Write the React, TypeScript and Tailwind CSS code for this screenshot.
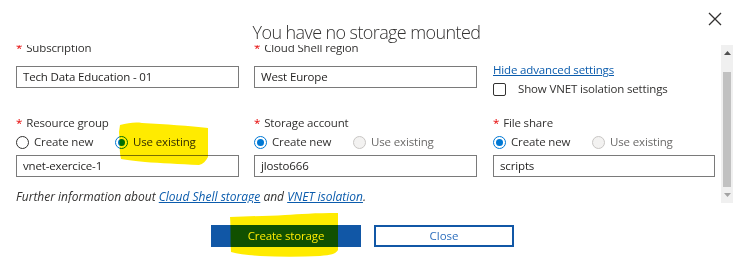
import React from "react";

const font = "font-['Open_Sans','Noto_Sans',sans-serif]";
const body = "text-[11.5px] tracking-[-0.15px]";

function Label({ text }: { text: string }) {
  return (
    <div className={`h-[16px] leading-[16px] ${body} text-[#323130] whitespace-nowrap`}>
      <span className="text-[#e50000] mr-[4px]">*</span>
      {text}
    </div>
  );
}

function Input({ value, w = "w-[223px]" }: { value: string; w?: string }) {
  return (
    <div className={`h-[22px] ${w} border border-[#7a7a7a] bg-white px-[6px] flex items-center ${body} text-[#201f1e] whitespace-nowrap`}>
      {value}
    </div>
  );
}

function Radio({ checked, disabled, label }: { checked?: boolean; disabled?: boolean; label: string }) {
  return (
    <div className="flex items-center h-[16px] w-[99px] whitespace-nowrap">
      <span
        className={
          "w-[13px] h-[13px] rounded-full border flex items-center justify-center shrink-0 " +
          (checked
            ? "border-[#0078d4] bg-white"
            : disabled
            ? "border-[#c8c6c4] bg-[#f3f2f1]"
            : "border-[#323130] bg-white")
        }
      >
        {checked && <span className="w-[7px] h-[7px] rounded-full bg-[#0078d4]" />}
      </span>
      <span className={`ml-[5px] ${body} ` + (disabled ? "text-[#6b6a69]" : "text-[#323130]")}>{label}</span>
    </div>
  );
}

function Radios({ first, second }: { first: boolean; second?: "checked" | "disabled" | "normal" }) {
  return (
    <div className="flex mt-[3px]">
      <Radio checked={first} label="Create new" />
      <Radio checked={second === "checked"} disabled={second === "disabled"} label="Use existing" />
    </div>
  );
}

export default function App() {
  return (
    <div className={`w-[733px] h-[265px] bg-white relative overflow-hidden ${font}`}>
      {/* header */}
      <div className="h-[45px] relative flex justify-center">
        <div className="pt-[20px] text-[18px] leading-[24px] tracking-[-0.6px] font-light text-[#323130] whitespace-nowrap">
          You have no storage mounted
        </div>
        <button className="absolute right-[11px] top-[12px] w-[14px] h-[14px]">
          <svg width="14" height="14" viewBox="0 0 14 14">
            <path d="M1 1 L13 13 M13 1 L1 13" stroke="#323130" strokeWidth="1.3" fill="none" />
          </svg>
        </button>
      </div>

      {/* body */}
      <div className="flex">
        <div className="w-[725px] h-[158px] overflow-hidden">
          <div className="mt-[-5px] pl-[16px]">
            {/* row 1 */}
            <div className="flex gap-[15px] h-[48px]">
              <div className="flex flex-col w-[223px]">
                <Label text="Subscription" />
                <div className="mt-[10px]">
                  <Input value="Tech Data Education - 01" />
                </div>
              </div>
              <div className="flex flex-col w-[223px]">
                <Label text="Cloud Shell region" />
                <div className="mt-[10px]">
                  <Input value="West Europe" />
                </div>
              </div>
              <div className="flex flex-col w-[222px] ml-[1px]">
                <a className={`mt-[22px] h-[16px] leading-[16px] ${body} text-[#0b5cad] underline whitespace-nowrap`}>
                  Hide advanced settings
                </a>
                <div className="mt-[3px] flex items-center h-[16px]">
                  <span className="w-[13px] h-[13px] border border-[#323130] rounded-[2px] bg-white shrink-0" />
                  <span className={`ml-[12px] ${body} text-[#323130] whitespace-nowrap`}>
                    Show VNET isolation settings
                  </span>
                </div>
              </div>
            </div>

            {/* row 2 */}
            <div className="flex gap-[15px] mt-[27px]">
              <div className="flex flex-col w-[223px]">
                <Label text="Resource group" />
                <Radios first={false} second="checked" />
                <div className="mt-[5px]">
                  <Input value="vnet-exercice-1" />
                </div>
              </div>
              <div className="flex flex-col w-[223px]">
                <Label text="Storage account" />
                <Radios first={true} second="disabled" />
                <div className="mt-[5px]">
                  <Input value="jlosto666" />
                </div>
              </div>
              <div className="flex flex-col w-[222px] ml-[1px]">
                <Label text="File share" />
                <Radios first={true} second="disabled" />
                <div className="mt-[5px]">
                  <Input value="scripts" w="w-[222px]" />
                </div>
              </div>
            </div>

            {/* further info */}
            <div className="mt-[12px] h-[16px] leading-[16px] text-[12px] italic text-[#323130] whitespace-nowrap">
              Further information about{" "}
              <a className="text-[#0b5cad] underline">Cloud Shell storage</a> and{" "}
              <a className="text-[#0b5cad] underline">VNET isolation</a>.
            </div>
          </div>
        </div>

        {/* scrollbar */}
        <div className="w-[12px] h-[158px] bg-[#f0f0f0] shrink-0 flex flex-col items-center">
          <div className="h-[16px] flex items-center justify-center">
            <svg width="7" height="4" viewBox="0 0 7 4">
              <path d="M0 4 L3.5 0 L7 4 Z" fill="#505050" />
            </svg>
          </div>
          <div className="mt-[11px] w-[8px] h-[115px] bg-[#c1c1c1]" />
          <div className="mt-auto h-[16px] flex items-center justify-center">
            <svg width="7" height="4" viewBox="0 0 7 4">
              <path d="M0 0 L7 0 L3.5 4 Z" fill="#a3a3a3" />
            </svg>
          </div>
        </div>
      </div>

      {/* footer */}
      <div className="w-[725px] flex justify-center gap-[13px] pt-[22px]">
        <button className="w-[150px] h-[22px] bg-[#1157a6] text-white text-[11.5px] tracking-[-0.15px] leading-[22px]">
          Create storage
        </button>
        <button className="w-[140px] h-[22px] border-2 border-[#1157a6] bg-white text-[#2e6fbd] text-[11.5px] leading-[18px]">
          Close
        </button>
      </div>

      {/* marker highlights */}
      <svg
        className="absolute inset-0 pointer-events-none mix-blend-multiply"
        width="733"
        height="265"
        viewBox="0 0 733 265"
      >
        <path
          d="M120 125 C128 123 135 122 142 123 C165 124 190 126 208 128 L208 157 C206 161 203 164 199 165 C180 164 160 163 145 162 C135 161 127 160 121 159 C119 150 120 140 119 132 Z"
          fill="#ffeb00"
        />
        <path
          d="M230 217 C250 216 270 216 285 215 C300 214 315 213 338 213 L338 250 C336 254 330 255 320 256 C300 257 280 257 260 256 C248 255 238 254 231 252 C230 240 231 228 230 217 Z"
          fill="#ffeb00"
        />
      </svg>
    </div>
  );
}
